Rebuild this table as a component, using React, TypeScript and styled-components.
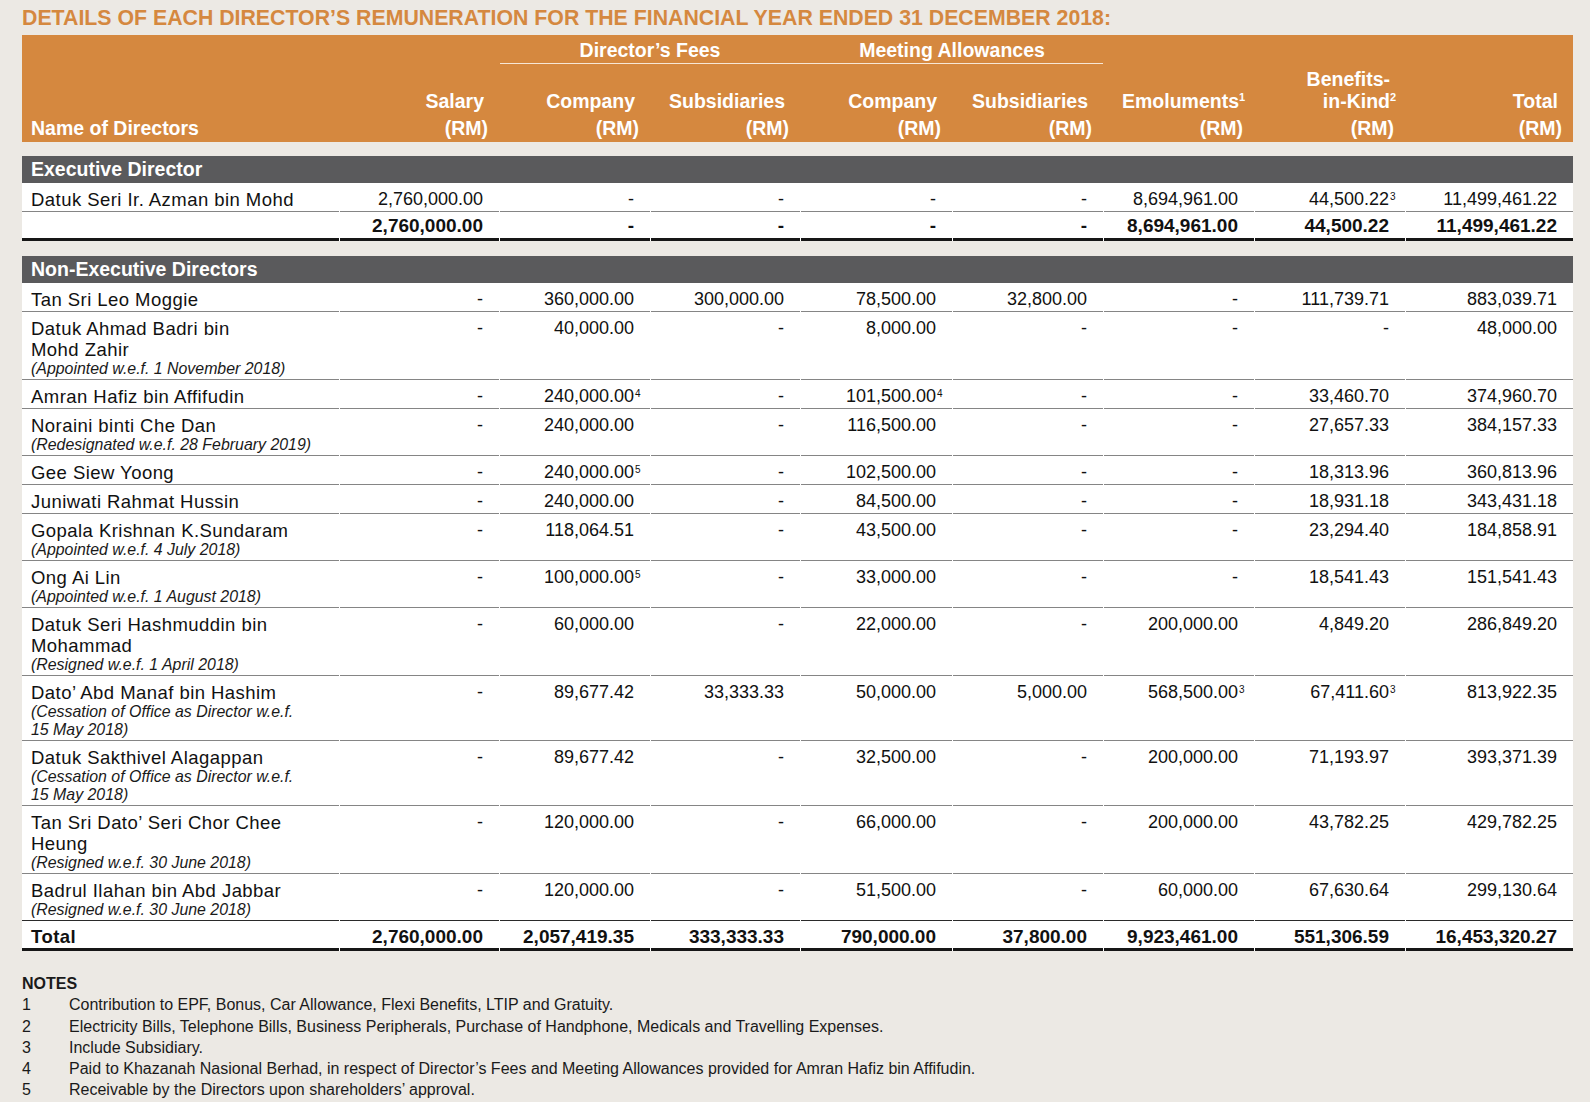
import React from "react";
import styled, { createGlobalStyle } from "styled-components";

const ORANGE = "#D5883F";
const COLS = "317px 159px 150px 149px 151px 150px 150px 150px 167px";

const GlobalStyle = createGlobalStyle`
  html, body { margin: 0; padding: 0; overflow: hidden; background: #ECE9E4; }
  body { font-family: "Liberation Sans", Arial, Helvetica, sans-serif; color: #111; }
`;

const Page = styled.div`
  width: 1551px;
  padding: 6px 17px 0 22px;
`;

const Title = styled.h1`
  margin: 0 0 5px;
  font-size: 21.3px;
  line-height: 24px;
  font-weight: 700;
  color: ${ORANGE};
  white-space: nowrap;
`;

const Header = styled.div`
  display: grid;
  grid-template-columns: ${COLS};
  grid-template-rows: 29px 78px;
  column-gap: 1px;
  background: ${ORANGE};
  color: #fff;
  font-weight: 700;
  font-size: 19.5px;
  line-height: 22px;
  white-space: nowrap;
`;

const HeadCell = styled.div<{ $col: string; $row: string; $left?: boolean }>`
  grid-column: ${(p) => p.$col};
  grid-row: ${(p) => p.$row};
  align-self: end;
  text-align: ${(p) => (p.$left ? "left" : "right")};
  padding: ${(p) => (p.$left ? "0 0 3px 9px" : "0 11px 3px 0")};
`;

const HeadLine = styled.div<{ $last?: boolean }>`
  padding-right: 4px;
  margin-bottom: ${(p) => (p.$last ? "5px" : "0")};
`;

const HeadUnit = styled.div``;

const GroupLabel = styled.div<{ $col: string }>`
  grid-column: ${(p) => p.$col};
  grid-row: 1;
  text-align: center;
  padding-top: 4px;
`;

const GroupRule = styled.div`
  grid-column: 3 / span 4;
  grid-row: 1;
  align-self: end;
  height: 1px;
  background: #f7e7d6;
`;

const HeadSup = styled.span`
  display: inline-block;
  width: 0;
  font-size: 11px;
  line-height: 11px;
  vertical-align: top;
  position: relative;
  top: 2px;
`;

const SectionBar = styled.div<{ $gap: number }>`
  margin-top: ${(p) => p.$gap}px;
  height: 27px;
  background: #5a5a5c;
  color: #fff;
  font-weight: 700;
  font-size: 19.5px;
  line-height: 27px;
  padding-left: 9px;
`;

type Rule = "light" | "dark" | "heavy";
type Kind = "normal" | "subtotal" | "total";

const RowGrid = styled.div`
  display: grid;
  grid-template-columns: ${COLS};
  column-gap: 1px;
  background: #fff;
`;

const padFor = (k: Kind) =>
  k === "subtotal" ? "3px" : k === "total" ? "5px" : "6px";
const bottomPadFor = (k: Kind) => (k === "subtotal" ? "2px" : "1px");
const borderFor = (r: Rule) =>
  r === "heavy" ? "3px solid #161616" : r === "dark" ? "1px solid #2a2a2a" : "1px solid #858585";

const NameCell = styled.div<{ $kind: Kind; $rule: Rule }>`
  padding: ${(p) => padFor(p.$kind)} 0 ${(p) => bottomPadFor(p.$kind)} 9px;
  border-bottom: ${(p) => borderFor(p.$rule)};
  font-weight: ${(p) => (p.$kind === "normal" ? 400 : 700)};
  white-space: nowrap;
`;

const NameLine = styled.div`
  font-size: 18.5px;
  line-height: 21px;
  letter-spacing: 0.45px;
`;

const NoteLine = styled.div`
  font-size: 15.9px;
  line-height: 18px;
  font-style: italic;
  color: #1a1a1a;
`;

const NumCell = styled.div<{ $kind: Kind; $rule: Rule }>`
  padding: ${(p) => padFor(p.$kind)} 16px ${(p) => bottomPadFor(p.$kind)} 0;
  border-bottom: ${(p) => borderFor(p.$rule)};
  text-align: right;
  font-size: ${(p) => (p.$kind === "normal" ? "18px" : "19px")};
  line-height: 21px;
  font-weight: ${(p) => (p.$kind === "normal" ? 400 : 700)};
  white-space: nowrap;
`;

const Sup = styled.span`
  display: inline-block;
  width: 0;
  font-size: 10px;
  line-height: 10px;
  vertical-align: top;
  position: relative;
  top: 3px;
  left: 1px;
`;

const Notes = styled.div`
  margin-top: 22px;
  font-size: 16px;
  line-height: 21.3px;
  color: #1a1a1a;
`;

const NotesTitle = styled.div`
  font-weight: 700;
`;

const NoteItem = styled.div`
  display: grid;
  grid-template-columns: 47px 1fr;
`;

type Val = string | [string, string];

interface RowData {
  name: string[];
  notes?: string[];
  values: Val[];
}

const execRows: RowData[] = [
  {
    name: ["Datuk Seri Ir. Azman bin Mohd"],
    values: ["2,760,000.00", "-", "-", "-", "-", "8,694,961.00", ["44,500.22", "3"], "11,499,461.22"],
  },
];

const execTotal: Val[] = ["2,760,000.00", "-", "-", "-", "-", "8,694,961.00", "44,500.22", "11,499,461.22"];

const nonExecRows: RowData[] = [
  {
    name: ["Tan Sri Leo Moggie"],
    values: ["-", "360,000.00", "300,000.00", "78,500.00", "32,800.00", "-", "111,739.71", "883,039.71"],
  },
  {
    name: ["Datuk Ahmad Badri bin", "Mohd Zahir"],
    notes: ["(Appointed w.e.f. 1 November 2018)"],
    values: ["-", "40,000.00", "-", "8,000.00", "-", "-", "-", "48,000.00"],
  },
  {
    name: ["Amran Hafiz bin Affifudin"],
    values: ["-", ["240,000.00", "4"], "-", ["101,500.00", "4"], "-", "-", "33,460.70", "374,960.70"],
  },
  {
    name: ["Noraini binti Che Dan"],
    notes: ["(Redesignated w.e.f. 28 February 2019)"],
    values: ["-", "240,000.00", "-", "116,500.00", "-", "-", "27,657.33", "384,157.33"],
  },
  {
    name: ["Gee Siew Yoong"],
    values: ["-", ["240,000.00", "5"], "-", "102,500.00", "-", "-", "18,313.96", "360,813.96"],
  },
  {
    name: ["Juniwati Rahmat Hussin"],
    values: ["-", "240,000.00", "-", "84,500.00", "-", "-", "18,931.18", "343,431.18"],
  },
  {
    name: ["Gopala Krishnan K.Sundaram"],
    notes: ["(Appointed w.e.f. 4 July 2018)"],
    values: ["-", "118,064.51", "-", "43,500.00", "-", "-", "23,294.40", "184,858.91"],
  },
  {
    name: ["Ong Ai Lin"],
    notes: ["(Appointed w.e.f. 1 August 2018)"],
    values: ["-", ["100,000.00", "5"], "-", "33,000.00", "-", "-", "18,541.43", "151,541.43"],
  },
  {
    name: ["Datuk Seri Hashmuddin bin", "Mohammad"],
    notes: ["(Resigned w.e.f. 1 April 2018)"],
    values: ["-", "60,000.00", "-", "22,000.00", "-", "200,000.00", "4,849.20", "286,849.20"],
  },
  {
    name: ["Dato\u2019 Abd Manaf bin Hashim"],
    notes: ["(Cessation of Office as Director w.e.f.", "15 May 2018)"],
    values: ["-", "89,677.42", "33,333.33", "50,000.00", "5,000.00", ["568,500.00", "3"], ["67,411.60", "3"], "813,922.35"],
  },
  {
    name: ["Datuk Sakthivel Alagappan"],
    notes: ["(Cessation of Office as Director w.e.f.", "15 May 2018)"],
    values: ["-", "89,677.42", "-", "32,500.00", "-", "200,000.00", "71,193.97", "393,371.39"],
  },
  {
    name: ["Tan Sri Dato\u2019 Seri Chor Chee", "Heung"],
    notes: ["(Resigned w.e.f. 30 June 2018)"],
    values: ["-", "120,000.00", "-", "66,000.00", "-", "200,000.00", "43,782.25", "429,782.25"],
  },
  {
    name: ["Badrul Ilahan bin Abd Jabbar"],
    notes: ["(Resigned w.e.f. 30 June 2018)"],
    values: ["-", "120,000.00", "-", "51,500.00", "-", "60,000.00", "67,630.64", "299,130.64"],
  },
];

const grandTotal: Val[] = [
  "2,760,000.00",
  "2,057,419.35",
  "333,333.33",
  "790,000.00",
  "37,800.00",
  "9,923,461.00",
  "551,306.59",
  "16,453,320.27",
];

const notes = [
  "Contribution to EPF, Bonus, Car Allowance, Flexi Benefits, LTIP and Gratuity.",
  "Electricity Bills, Telephone Bills, Business Peripherals, Purchase of Handphone, Medicals and Travelling Expenses.",
  "Include Subsidiary.",
  "Paid to Khazanah Nasional Berhad, in respect of Director\u2019s Fees and Meeting Allowances provided for Amran Hafiz bin Affifudin.",
  "Receivable by the Directors upon shareholders\u2019 approval.",
];

function DataRow({
  name,
  notes: sub,
  values,
  kind = "normal",
  rule = "light",
}: {
  name: string[];
  notes?: string[];
  values: Val[];
  kind?: Kind;
  rule?: Rule;
}) {
  return (
    <RowGrid>
      <NameCell $kind={kind} $rule={rule}>
        {name.map((n, i) => (
          <NameLine key={i}>{n || "\u00a0"}</NameLine>
        ))}
        {sub?.map((n, i) => (
          <NoteLine key={i}>{n}</NoteLine>
        ))}
      </NameCell>
      {values.map((v, i) => {
        const [text, sup] = Array.isArray(v) ? v : [v, ""];
        return (
          <NumCell key={i} $kind={kind} $rule={rule}>
            {text}
            {sup && <Sup>{sup}</Sup>}
          </NumCell>
        );
      })}
    </RowGrid>
  );
}

const simpleHeads: { col: string; title: React.ReactNode[] }[] = [
  { col: "2", title: ["Salary"] },
  { col: "7", title: [<>Emoluments<HeadSup>1</HeadSup></>] },
  { col: "8", title: ["Benefits-", <>in-Kind<HeadSup>2</HeadSup></>] },
  { col: "9", title: ["Total"] },
];

const subHeads = [
  { col: "3", title: "Company" },
  { col: "4", title: "Subsidiaries" },
  { col: "5", title: "Company" },
  { col: "6", title: "Subsidiaries" },
];

export default function App() {
  return (
    <>
      <GlobalStyle />
      <Page>
        <Title>DETAILS OF EACH DIRECTOR’S REMUNERATION FOR THE FINANCIAL YEAR ENDED 31 DECEMBER 2018:</Title>
        <Header>
          <HeadCell $col="1" $row="1 / span 2" $left>
            Name of Directors
          </HeadCell>
          {simpleHeads.map((h) => (
            <HeadCell key={h.col} $col={h.col} $row="1 / span 2">
              {h.title.map((t, i) => (
                <HeadLine key={i} $last={i === h.title.length - 1}>
                  {t}
                </HeadLine>
              ))}
              <HeadUnit>(RM)</HeadUnit>
            </HeadCell>
          ))}
          <GroupLabel $col="3 / span 2">Director’s Fees</GroupLabel>
          <GroupLabel $col="5 / span 2">Meeting Allowances</GroupLabel>
          <GroupRule />
          {subHeads.map((h) => (
            <HeadCell key={h.col} $col={h.col} $row="2">
              <HeadLine $last>{h.title}</HeadLine>
              <HeadUnit>(RM)</HeadUnit>
            </HeadCell>
          ))}
        </Header>

        <SectionBar $gap={14}>Executive Director</SectionBar>
        {execRows.map((r, i) => (
          <DataRow key={i} {...r} />
        ))}
        <DataRow name={[""]} values={execTotal} kind="subtotal" rule="heavy" />

        <SectionBar $gap={15}>Non-Executive Directors</SectionBar>
        {nonExecRows.map((r, i) => (
          <DataRow key={i} {...r} rule={i === nonExecRows.length - 1 ? "dark" : "light"} />
        ))}
        <DataRow name={["Total"]} values={grandTotal} kind="total" rule="heavy" />

        <Notes>
          <NotesTitle>NOTES</NotesTitle>
          {notes.map((n, i) => (
            <NoteItem key={i}>
              <span>{i + 1}</span>
              <span>{n}</span>
            </NoteItem>
          ))}
        </Notes>
      </Page>
    </>
  );
}
